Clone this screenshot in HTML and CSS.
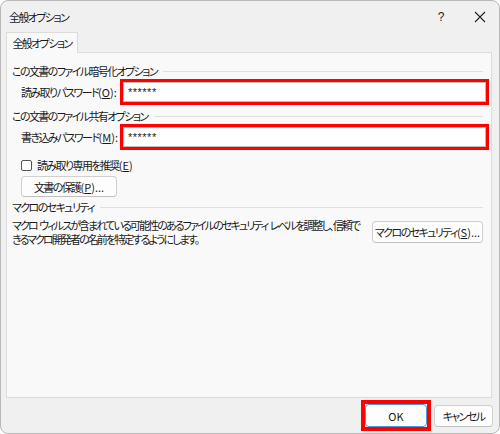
FILE: index.html
```html
<!DOCTYPE html>
<html lang="ja">
<head>
    <meta charset="UTF-8">
    <title>全般オプション</title>
    <link rel="stylesheet" href="styles.css">
</head>
<body>
    <div class="dialog">
        <div class="titlebar">
            <span class="caption">全般オプション</span>
            <span class="ctl help">?</span>
            <span class="ctl close">
                <svg width="12" height="12" viewBox="0 0 12 12"><path d="M1 1L11 11M11 1L1 11" stroke="#222" stroke-width="1.1" fill="none"/></svg>
            </span>
        </div>

        <div class="tabs">
            <div class="tab">全般オプション</div>
        </div>

        <div class="panel">
            <div class="group first">この文書のファイル暗号化オプション</div>
            <div class="row">
                <label class="lbl">読み取りパスワード<span class="en">(<u>O</u>):</span></label>
                <div class="mark"><div class="pwd">******</div></div>
            </div>

            <div class="group">この文書のファイル共有オプション</div>
            <div class="row">
                <label class="lbl">書き込みパスワード<span class="en">(<u>M</u>):</span></label>
                <div class="mark"><div class="pwd">******</div></div>
            </div>

            <div class="check">
                <span class="box"></span>
                読み取り専用を推奨<span class="en">(<u>E</u>)</span>
            </div>
            <div class="btn protect">文書の保護<span class="en">(<u>P</u>)...</span></div>

            <div class="group macro">マクロのセキュリティ</div>
            <div class="macrorow">
                <p class="desc">マクロ<span class="en"> </span>ウィルスが含まれている可能性のあるファイルのセキュリティ<span class="en"> </span>レベルを調整し、信頼で<br>きるマクロ開発者の名前を特定するようにします。</p>
                <div class="btn">マクロのセキュリティ<span class="en">(<u>S</u>)...</span></div>
            </div>
        </div>

        <div class="footer">
            <div class="okmark"><div class="btn ok en">OK</div></div>
            <div class="btn cancel">キャンセル</div>
        </div>
    </div>
</body>
</html>
```

FILE: styles.css
```css
html, body{
    margin:0;
    padding:0;
    background:#fff;
}
body{
    font-family:"Noto Sans CJK JP", "Noto Sans", sans-serif;
    font-size:11px;
    letter-spacing:-1.6px;
    font-feature-settings:"palt";
    color:#1a1a1a;
    white-space:nowrap;
}
.en{letter-spacing:0;}
u{text-decoration:underline; text-underline-offset:1px;}

.dialog{
    width:500px;
    height:434px;
    box-sizing:border-box;
    background:#f0f0f0;
    border:1px solid #b8b8b8;
    border-radius:8px;
    overflow:hidden;
}

.titlebar{
    height:31px;
    display:flex;
    align-items:center;
    padding-left:8px;
}
.titlebar .caption{flex:1;}
.titlebar .ctl{
    width:40px;
    display:flex;
    justify-content:center;
    align-items:center;
    letter-spacing:0;
}
.titlebar .help{font-family:"Liberation Sans", sans-serif; font-size:12px; color:#222; margin-right:-1px;}
.titlebar .close{margin-right:-1px;}

.tabs{
    display:flex;
    padding-left:5px;
    height:21px;
}
.tab{
    width:72px;
    height:21px;
    box-sizing:border-box;
    background:#f9f9f9;
    border:1px solid #dcdcdc;
    border-bottom:none;
    text-align:center;
    line-height:21px;
    position:relative;
    z-index:1;
}

.panel{
    margin:-1px 7px 0 5px;
    height:346px;
    box-sizing:border-box;
    background:#f9f9f9;
    border:1px solid #dcdcdc;
    padding:0 8px 0 5px;
}

.group{
    display:flex;
    align-items:center;
    height:16px;
    margin-top:3px;
}
.group::after{
    content:"";
    flex:1;
    height:1px;
    background:#e0e0e0;
    margin-left:6px;
}
.group.first{margin-top:10px;}
.group.macro{margin-top:2px;}

.row{
    display:flex;
    align-items:center;
    height:26px;
    padding-left:9px;
}
.lbl{width:99px;}
.mark{
    flex:1;
    margin-right:-6px;
    height:26px;
    box-sizing:border-box;
    border:3px solid #ff0000;
    background:#fff;
}
.pwd{
    height:20px;
    box-sizing:border-box;
    border:1px solid #bcbcbc;
    padding-left:4px;
    line-height:18px;
    font-family:"Liberation Sans", sans-serif;
    font-size:11px;
    letter-spacing:0.5px;
}

.check{
    display:flex;
    align-items:center;
    height:16px;
    margin-top:7px;
    padding-left:9px;
}
.check .box{
    width:11px;
    height:11px;
    box-sizing:border-box;
    border:1px solid #555;
    border-radius:2px;
    background:#fff;
    margin-right:5px;
}

.btn{
    height:21px;
    box-sizing:border-box;
    border:1px solid #d0d0d0;
    border-bottom-color:#c0c0c0;
    border-radius:4px;
    background:#fdfdfd;
    display:flex;
    align-items:center;
    justify-content:center;
    padding:0;
}
.protect{
    width:96px;
    margin:3px 0 0 9px;
}

.macrorow{
    display:flex;
    align-items:center;
    margin-top:3px;
}
.desc{
    margin:0;
    width:354px;
    flex-shrink:0;
    line-height:14px;
    letter-spacing:-1.9px;
}
.desc .en{letter-spacing:0;}
.macrorow .btn{margin-left:6px; width:112px; height:22px;}

.footer{
    display:flex;
    justify-content:flex-end;
    align-items:center;
    padding:2px 6px 0 0;
    gap:3px;
}
.okmark{
    border:4px solid #ff0000;
    width:70px;
    height:31px;
    box-sizing:border-box;
}
.btn.ok{
    height:23px;
    border:1px solid #4e9ae0;
    border-radius:4px;
}
.btn.cancel{
    width:59px;
    height:22px;
}
```
